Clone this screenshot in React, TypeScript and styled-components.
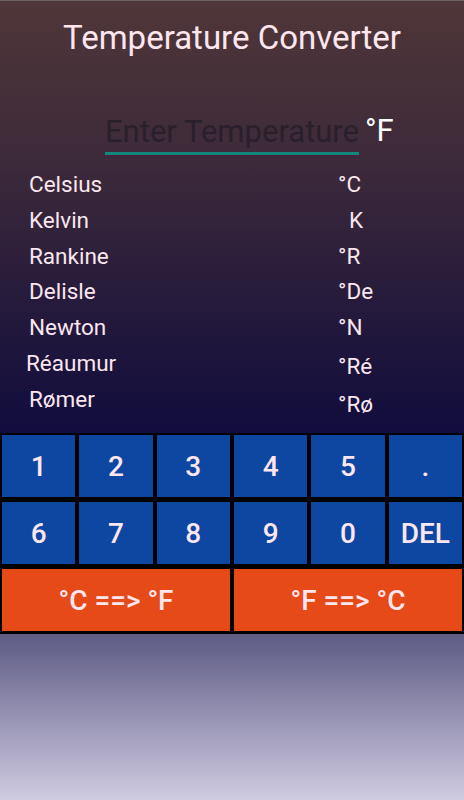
import React from "react";
import styled, { createGlobalStyle } from "styled-components";

const GlobalStyle = createGlobalStyle`
  html, body { margin: 0; padding: 0; }
  body { font-family: Roboto, "Noto Sans", sans-serif; background: #cfcbe1; }
  * { box-sizing: border-box; }
`;

const Page = styled.div`
  width: 464px;
  height: 800px;
  display: flex;
  flex-direction: column;
  border-top: 1px solid #6a6264;
  background: linear-gradient(
    to bottom,
    #4f3638 0px,
    #3d2a3a 160px,
    #100c3d 433px,
    #5f5c86 636px,
    #d0cce2 800px
  );
  overflow: hidden;
`;

const Title = styled.h1`
  margin: 17px 0 0;
  font-family: Roboto, sans-serif;
  font-weight: 400;
  font-size: 33px;
  line-height: 40px;
  text-align: center;
  color: #fde6ee;
`;

const InputRow = styled.div`
  display: flex;
  align-items: flex-start;
  gap: 6px;
  margin-top: 55px;
  padding-left: 105px;
`;

const TempInput = styled.input`
  width: 254px;
  height: 42px;
  padding: 0 0 3px;
  margin: 0;
  border: none;
  border-bottom: 3px solid #14877d;
  box-shadow: 0 1px 0 #4b1c3d;
  background: transparent;
  font-family: Roboto, sans-serif;
  font-size: 31px;
  line-height: 36px;
  color: #fff;
  outline: none;
  &::placeholder {
    color: #2a1f2c;
  }
`;

const UnitSuffix = styled.span`
  font-family: Roboto, sans-serif;
  font-size: 31px;
  line-height: 36px;
  color: #ffffff;
`;

const ScaleList = styled.div`
  display: flex;
  flex-direction: column;
  margin-top: 11px;
  padding-left: 29px;
`;

const ScaleRow = styled.div`
  display: grid;
  grid-template-columns: 309px 1fr;
  height: 35.8px;
  font-family: Roboto, sans-serif;
  font-size: 22.5px;
  line-height: 36px;
  color: #fbe6ee;
`;

const ScaleName = styled.span<{ $shiftX?: number }>`
  margin-left: ${(p) => p.$shiftX ?? 0}px;
  white-space: nowrap;
`;

const ScaleUnit = styled.span<{ $indent?: number; $shiftY?: number }>`
  padding-left: ${(p) => p.$indent ?? 0}px;
  transform: translateY(${(p) => p.$shiftY ?? 0}px);
  white-space: nowrap;
`;

const Keypad = styled.div`
  margin-top: 16px;
  background: #000;
  display: grid;
  grid-template-columns: repeat(6, 1fr);
  grid-auto-rows: 67px;
`;

const Key = styled.button<{ $span?: number; $accent?: boolean }>`
  grid-column: span ${(p) => p.$span ?? 1};
  margin: 2.5px 2px;
  border: none;
  border-radius: 0;
  padding: 0;
  background: ${(p) => (p.$accent ? "#e64a19" : "#0d47a1")};
  color: #fde6ee;
  font-family: Roboto, sans-serif;
  font-weight: 500;
  font-size: 28px;
  cursor: pointer;
  display: flex;
  align-items: center;
  justify-content: center;
`;

const scales: { name: string; unit: string; shiftX?: number; indent?: number; shiftY?: number }[] = [
  { name: "Celsius", unit: "°C" },
  { name: "Kelvin", unit: "K", indent: 11 },
  { name: "Rankine", unit: "°R" },
  { name: "Delisle", unit: "°De" },
  { name: "Newton", unit: "°N" },
  { name: "Réaumur", unit: "°Ré", shiftX: -3, shiftY: 3 },
  { name: "Rømer", unit: "°Rø", shiftY: 5 },
];

const keys = ["1", "2", "3", "4", "5", ".", "6", "7", "8", "9", "0", "DEL"];

export default function App() {
  return (
    <>
      <GlobalStyle />
      <Page>
        <Title>Temperature Converter</Title>
        <InputRow>
          <TempInput placeholder="Enter Temperature" />
          <UnitSuffix>°F</UnitSuffix>
        </InputRow>
        <ScaleList>
          {scales.map((s) => (
            <ScaleRow key={s.name}>
              <ScaleName $shiftX={s.shiftX}>{s.name}</ScaleName>
              <ScaleUnit $indent={s.indent} $shiftY={s.shiftY}>
                {s.unit}
              </ScaleUnit>
            </ScaleRow>
          ))}
        </ScaleList>
        <Keypad>
          {keys.map((k) => (
            <Key key={k}>{k}</Key>
          ))}
          <Key $span={3} $accent>
            °C ==&gt; °F
          </Key>
          <Key $span={3} $accent>
            °F ==&gt; °C
          </Key>
        </Keypad>
      </Page>
    </>
  );
}
